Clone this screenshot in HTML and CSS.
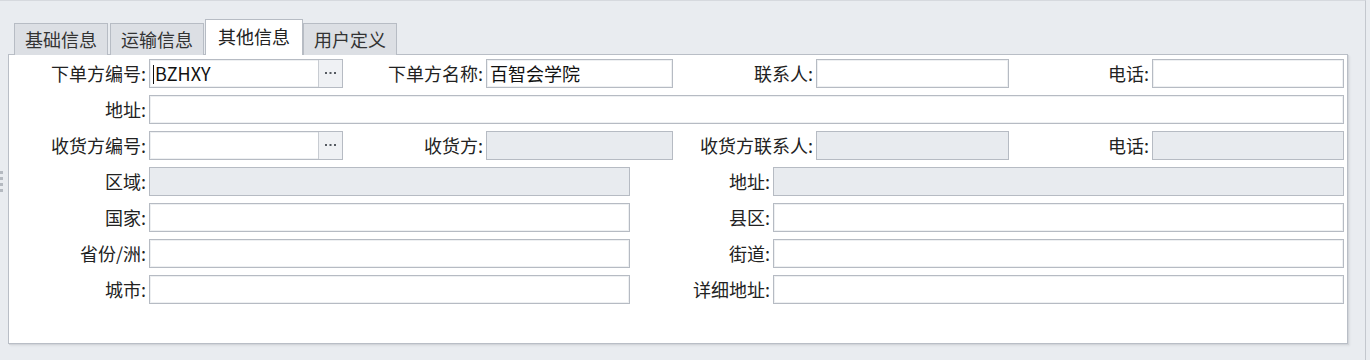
FILE: index.html
```html
<!DOCTYPE html>
<html lang="zh-CN">
<head>
<meta charset="UTF-8" />
<title>其他信息</title>
<link rel="stylesheet" href="styles.css">
</head>
<body>
<div class="page">
  <div class="grip"><i></i><i></i><i></i><i></i></div>

  <div class="tabs">
    <div class="tab">基础信息</div>
    <div class="tab">运输信息</div>
    <div class="tab active">其他信息</div>
    <div class="tab">用户定义</div>
  </div>

  <section class="panel">
    <div class="row row-quad">
      <label>下单方编号:</label>
      <div class="field picker"><span class="val"><span class="caret"></span>BZHXY</span><span class="dots"><svg width="11" height="3" viewBox="0 0 11 3"><rect x="0" y="0" width="2" height="2" /><rect x="4.5" y="0" width="2" height="2" /><rect x="9" y="0" width="2" height="2" /></svg></span></div>
      <label>下单方名称:</label>
      <div class="field"><span class="val">百智会学院</span></div>
      <label>联系人:</label>
      <div class="field"></div>
      <label>电话:</label>
      <div class="field"></div>
    </div>

    <div class="row row-full">
      <label>地址:</label>
      <div class="field"></div>
    </div>

    <div class="row row-quad">
      <label>收货方编号:</label>
      <div class="field picker"><span class="val"></span><span class="dots"><svg width="11" height="3" viewBox="0 0 11 3"><rect x="0" y="0" width="2" height="2" /><rect x="4.5" y="0" width="2" height="2" /><rect x="9" y="0" width="2" height="2" /></svg></span></div>
      <label>收货方:</label>
      <div class="field disabled"></div>
      <label>收货方联系人:</label>
      <div class="field disabled"></div>
      <label>电话:</label>
      <div class="field disabled"></div>
    </div>

    <div class="row row-half">
      <label>区域:</label>
      <div class="field disabled"></div>
      <label>地址:</label>
      <div class="field disabled"></div>
    </div>

    <div class="row row-half">
      <label>国家:</label>
      <div class="field"></div>
      <label>县区:</label>
      <div class="field"></div>
    </div>

    <div class="row row-half">
      <label>省份/洲:</label>
      <div class="field"></div>
      <label>街道:</label>
      <div class="field"></div>
    </div>

    <div class="row row-half">
      <label>城市:</label>
      <div class="field"></div>
      <label>详细地址:</label>
      <div class="field"></div>
    </div>
  </section>
</div>
</body>
</html>
```

FILE: styles.css
```css
* {
  box-sizing: border-box;
}
html, body {
  margin: 0;
  padding: 0;
}
body {
  width: 1370px;
  height: 360px;
  overflow: hidden;
  background: #e9ecf0;
  color: #222;
  font-family: "Noto Sans CJK SC", "Noto Sans", sans-serif;
  font-size: 18px;
}
.page {
  position: relative;
  width: 1366px;
  height: 360px;
  padding: 18px 0 0 8px;
  border-top: 1px solid #d6d9de;
  border-right: 1px solid #c4c8ce;
}

/* grip on the left edge */
.grip {
  position: absolute;
  left: 0;
  top: 170px;
  display: flex;
  flex-direction: column;
  gap: 3px;
}
.grip i {
  display: block;
  width: 3px;
  height: 3px;
  background: #b4b9c0;
}

/* tabs */
.tabs {
  display: flex;
  align-items: flex-end;
  margin-left: 6px;
  height: 36px;
  position: relative;
  z-index: 1;
  margin-bottom: -1px;
}
.tab {
  height: 32px;
  padding: 0 10px;
  margin-right: 2px;
  background: #dcdfe4;
  border: 1px solid #b7bcc4;
  border-bottom: none;
  line-height: 30px;
  color: #333;
  white-space: nowrap;
}
.tab.active {
  height: 36px;
  padding: 0 12px;
  margin-left: -1px;
  margin-right: 0;
  background: #fff;
  line-height: 32px;
  color: #222;
}

/* panel */
.panel {
  width: 1340px;
  height: 290px;
  background: #fff;
  border: 1px solid #b9bec6;
  padding: 4px 0 0 0;
  display: flex;
  flex-direction: column;
  gap: 7px;
  box-shadow: 1px 1px 0 #d2d5da, 2px 2px 2px rgba(0, 0, 0, 0.06);
}
.row {
  display: grid;
  height: 29px;
  align-items: center;
}
.row-quad {
  grid-template-columns: 140px 194px 143px 187px 143px 193px 143px 192px;
}
.row-full {
  grid-template-columns: 140px 1195px;
}
.row-half {
  grid-template-columns: 140px 481px 143px 571px;
}
.row label {
  text-align: right;
  padding-right: 3px;
  white-space: nowrap;
  line-height: 29px;
  color: #222;
}

/* fields */
.field {
  height: 29px;
  border: 1px solid #b6bbc3;
  box-shadow: inset 0 0 0 1px #eef0f2;
  background: #fff;
  display: flex;
  align-items: center;
  overflow: hidden;
}
.field.disabled {
  background: #e8ebef;
  box-shadow: none;
}
.field .val {
  flex: 1;
  padding-left: 3px;
  line-height: 27px;
  white-space: nowrap;
  color: #111;
}
.caret {
  display: inline-block;
  width: 1px;
  height: 19px;
  margin-right: 1px;
  background: #111;
  vertical-align: -3px;
}
.picker .dots {
  width: 24px;
  height: 27px;
  border-left: 1px solid #c8ccd2;
  background: #eff1f4;
  display: flex;
  align-items: center;
  justify-content: center;
}
.dots svg {
  fill: #555a61;
  display: block;
}
```
